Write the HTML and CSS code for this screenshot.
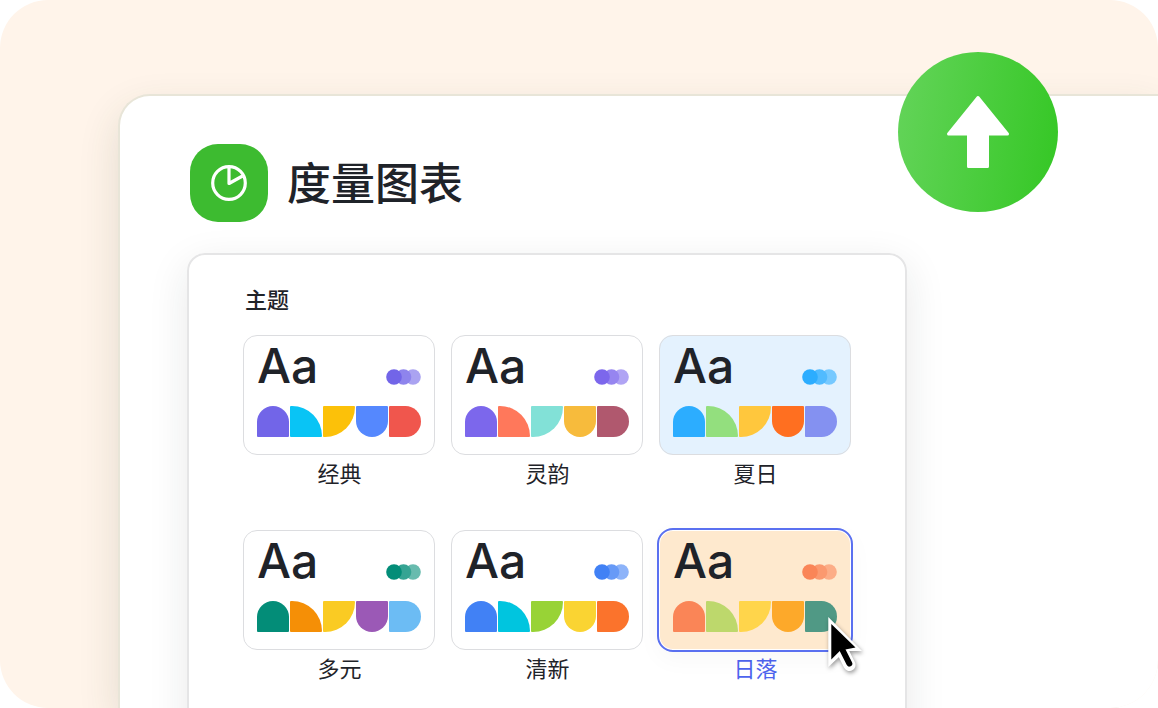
FILE: index.html
```html
<!DOCTYPE html>
<html lang="zh-CN">
<head>
<meta charset="utf-8">
<meta name="viewport" content="width=device-width, initial-scale=1">
<title>度量图表</title>
<link rel="stylesheet" href="styles.css">
</head>
<body>
<main class="stage">
  <section class="window">
    <header class="header">
      <span class="app-icon">
        <svg viewBox="0 0 78 78" fill="none" stroke="#fff" stroke-width="3.2" stroke-linejoin="round" aria-hidden="true">
          <circle cx="39" cy="39" r="16.3"/>
          <path d="M39 23v16.500l13.500-7.500"/>
        </svg>
      </span>
      <h1 class="title">度量图表</h1>
    </header>

    <fieldset class="panel">
      <legend class="panel-title">主题</legend>
      <div class="themes">
        <label class="theme classic">
          <span class="card">
            <input class="choice" type="radio" name="theme">
            <span class="sample">Aa</span>
            <svg class="dots" viewBox="0 0 35 16" aria-hidden="true"><circle class="light" cx="27" cy="8" r="7.8"/><circle class="mid" cx="17.5" cy="8" r="7.8"/><circle cx="8" cy="8" r="7.8"/></svg>
            <span class="swatches"><i></i><i></i><i></i><i></i><i></i></span>
          </span>
          <span class="name">经典</span>
        </label>
        <label class="theme charm">
          <span class="card">
            <input class="choice" type="radio" name="theme">
            <span class="sample">Aa</span>
            <svg class="dots" viewBox="0 0 35 16" aria-hidden="true"><circle class="light" cx="27" cy="8" r="7.8"/><circle class="mid" cx="17.5" cy="8" r="7.8"/><circle cx="8" cy="8" r="7.8"/></svg>
            <span class="swatches"><i></i><i></i><i></i><i></i><i></i></span>
          </span>
          <span class="name">灵韵</span>
        </label>
        <label class="theme summer">
          <span class="card">
            <input class="choice" type="radio" name="theme">
            <span class="sample">Aa</span>
            <svg class="dots" viewBox="0 0 35 16" aria-hidden="true"><circle class="light" cx="27" cy="8" r="7.8"/><circle class="mid" cx="17.5" cy="8" r="7.8"/><circle cx="8" cy="8" r="7.8"/></svg>
            <span class="swatches"><i></i><i></i><i></i><i></i><i></i></span>
          </span>
          <span class="name">夏日</span>
        </label>
        <label class="theme diverse">
          <span class="card">
            <input class="choice" type="radio" name="theme">
            <span class="sample">Aa</span>
            <svg class="dots" viewBox="0 0 35 16" aria-hidden="true"><circle class="light" cx="27" cy="8" r="7.8"/><circle class="mid" cx="17.5" cy="8" r="7.8"/><circle cx="8" cy="8" r="7.8"/></svg>
            <span class="swatches"><i></i><i></i><i></i><i></i><i></i></span>
          </span>
          <span class="name">多元</span>
        </label>
        <label class="theme fresh">
          <span class="card">
            <input class="choice" type="radio" name="theme">
            <span class="sample">Aa</span>
            <svg class="dots" viewBox="0 0 35 16" aria-hidden="true"><circle class="light" cx="27" cy="8" r="7.8"/><circle class="mid" cx="17.5" cy="8" r="7.8"/><circle cx="8" cy="8" r="7.8"/></svg>
            <span class="swatches"><i></i><i></i><i></i><i></i><i></i></span>
          </span>
          <span class="name">清新</span>
        </label>
        <label class="theme sunset">
          <span class="card">
            <input class="choice" type="radio" name="theme" checked>
            <span class="sample">Aa</span>
            <svg class="dots" viewBox="0 0 35 16" aria-hidden="true"><circle class="light" cx="27" cy="8" r="7.8"/><circle class="mid" cx="17.5" cy="8" r="7.8"/><circle cx="8" cy="8" r="7.8"/></svg>
            <span class="swatches"><i></i><i></i><i></i><i></i><i></i></span>
            <svg class="cursor" viewBox="0 0 40 60" aria-hidden="true">
              <path fill="#fff" d="M2.300 1v50L13 41h9V35h14z"/>
              <path fill="none" stroke="#fff" stroke-width="12" stroke-linecap="round" d="M17 36l6.500 13"/>
              <path d="M5.300 8v35.500l9-9L29.500 31.500z"/>
              <path fill="none" stroke="#000" stroke-width="6" stroke-linecap="round" d="M16 33l7.300 14.500"/>
            </svg>
          </span>
          <span class="name">日落</span>
        </label>
      </div>
    </fieldset>
  </section>

  <span class="badge">
    <svg viewBox="0 0 160 160" fill="#fff" stroke="#fff" stroke-width="3" stroke-linejoin="round" aria-hidden="true">
      <path d="M80 45.500 50.500 82H70.500v32.500h19V82h20z"/>
    </svg>
  </span>
</main>
</body>
</html>
```
FILE: styles.css
```css
* {
  box-sizing: border-box;
}

body {
  margin: 0;
  background: #fff;
  color: #1f2329;
  font-family: "Noto Sans CJK SC", sans-serif;
}

.stage {
  position: relative;
  display: flex;
  height: 100vh;
  padding: 94px 0 0 118px;
  overflow: hidden;
  border-radius: 48px;
  background: #fff4ea;
}

.window {
  flex: 1;
  padding: 48px 70px 0 68px;
  border: solid #e8e5d8;
  border-width: 2px 0 0 2px;
  border-radius: 32px 0 0 0;
  background: #fff;
  box-shadow: 0 16px 40px rgba(60, 70, 40, 0.14);
}

.header {
  display: flex;
  align-items: center;
  gap: 19px;
  padding-left: 2px;
}

.app-icon {
  width: 78px;
  height: 78px;
  border-radius: 28px;
  background: #3dbb30;
}

.app-icon svg,
.badge svg {
  display: block;
}

.title {
  margin: 0;
  padding-bottom: 4px;
  font-size: 44px;
  font-weight: 500;
  line-height: 64px;
}

.panel {
  width: 720px;
  min-height: 560px;
  margin: 31px 0 0 -1px;
  padding: 27px 54px;
  border: 2px solid #e5e5e6;
  border-radius: 18px;
  background: #fff;
  box-shadow: 0 12px 40px rgba(31, 35, 41, 0.1);
}

.panel-title {
  float: left;
  width: 100%;
  padding: 0 2px;
  font-size: 22px;
  font-weight: 500;
  line-height: 32px;
}

.themes {
  clear: both;
  display: grid;
  grid-template-columns: repeat(3, 192px);
  gap: 42px 16px;
  padding-top: 21px;
}

.theme {
  display: flex;
  flex-direction: column;
  gap: 1px;
  text-align: center;
}

.card {
  position: relative;
  display: grid;
  grid-template-columns: 1fr auto;
  align-content: start;
  height: 120px;
  padding: 2px 14px 0;
  border-radius: 14px;
}

.choice {
  position: absolute;
  inset: 0;
  margin: 0;
  border: 1px solid #dcdde0;
  border-radius: 14px;
  appearance: none;
  cursor: pointer;
}

.choice:checked {
  inset: -2px;
  border: 2px solid #5a70f0;
  border-radius: 16px;
  box-shadow: inset 0 0 0 1px #fff, 0 8px 24px rgba(31, 35, 41, 0.03);
}

.sample {
  font: 500 48px/58px Inter, sans-serif;
  text-align: left;
}

.dots {
  width: 35px;
  height: 16px;
  margin-top: 32px;
  fill: var(--a);
}

.dots .mid {
  fill: color-mix(in srgb, var(--a) 80%, var(--paper, #fff));
}

.dots .light {
  fill: color-mix(in srgb, var(--a) 60%, var(--paper, #fff));
}

.swatches {
  grid-column: 1 / -1;
  display: grid;
  grid-template-columns: repeat(5, 32px);
  gap: 1px;
  padding-top: 11px;
}

.swatches i {
  height: 31px;
  border-radius: 1px;
}

.swatches i:nth-child(1) {
  border-radius: 16px 16px 1px 1px;
  background: var(--a);
}

.swatches i:nth-child(2) {
  border-top-right-radius: 31px;
  background: var(--b);
}

.swatches i:nth-child(3) {
  border-bottom-right-radius: 31px;
  background: var(--c);
}

.swatches i:nth-child(4) {
  border-radius: 1px 1px 16px 16px;
  background: var(--d);
}

.swatches i:nth-child(5) {
  border-radius: 1px 16px 16px 1px;
  background: var(--e);
}

.name {
  padding-left: 1px;
  font-size: 22px;
  line-height: 32px;
}

.classic {
  --a: #7265e8;
  --b: #09c4f5;
  --c: #fcc109;
  --d: #5588fe;
  --e: #f0564d;
}

.charm {
  --a: #7c67ec;
  --b: #ff785b;
  --c: #82e1d7;
  --d: #f7bb3c;
  --e: #b0586e;
}

.summer {
  --paper: #e4f2fe;
  --a: #2cadff;
  --b: #93df7e;
  --c: #ffc73d;
  --d: #ff6f20;
  --e: #8491f1;
}

.diverse {
  --a: #038d78;
  --b: #f58f06;
  --c: #facb23;
  --d: #9b59b6;
  --e: #6cbcf4;
}

.fresh {
  --a: #4181f5;
  --b: #00c5df;
  --c: #98d336;
  --d: #fad432;
  --e: #fb732c;
}

.sunset {
  --paper: #fee9ce;
  --a: #fa8557;
  --b: #bdd86c;
  --c: #ffd54b;
  --d: #fda92a;
  --e: #509985;
}

.summer .card,
.sunset .card {
  background: var(--paper);
}

.sunset .name {
  color: #4e64ee;
}

.cursor {
  position: absolute;
  top: 86px;
  left: 167px;
  width: 40px;
  height: 60px;
  filter: drop-shadow(1px 2px 2px rgba(0, 0, 0, 0.4));
  pointer-events: none;
}

.badge {
  position: absolute;
  top: 52px;
  right: 100px;
  width: 160px;
  height: 160px;
  border-radius: 50%;
  background: linear-gradient(98deg, #64d45a, #34c724);
}
```
